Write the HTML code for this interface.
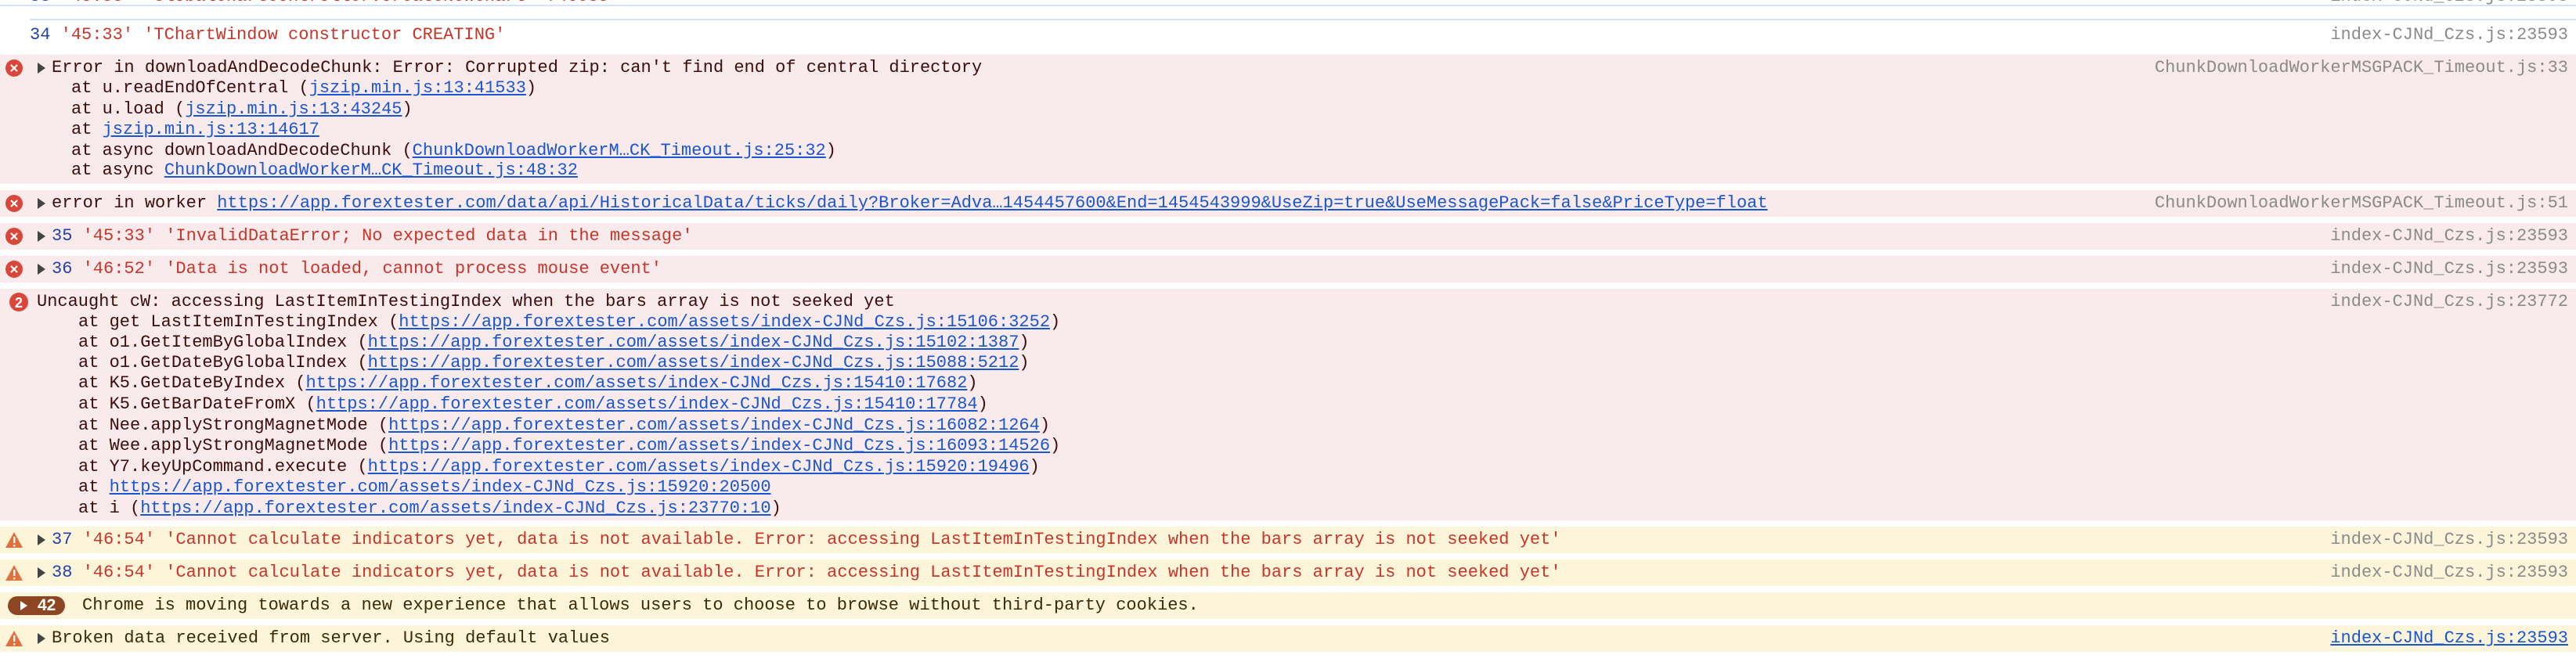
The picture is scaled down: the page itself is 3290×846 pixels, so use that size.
<!DOCTYPE html>
<html><head><meta charset="utf-8"><style>
*{margin:0;padding:0;box-sizing:border-box}
body{width:3290px;height:846px;background:#fff;position:relative;overflow:hidden;font-family:"Liberation Mono","DejaVu Sans Mono",monospace;font-size:22px;color:#3c0c0c}
.bg{position:absolute;left:0;width:3290px}
.e{background:#f9ebeb}.w{background:#fdf5da}
.l{position:absolute;height:26px;line-height:26px;white-space:pre}
.r{position:absolute;right:10px;height:26px;line-height:26px;color:#8a8a8a;white-space:pre}
.s{color:#c8352a}.n{color:#2242a8}
a{color:#1a56d0;text-decoration:underline}
.wt{color:#3b2a06}
.tri{position:absolute;width:0;height:0;border-top:7px solid transparent;border-bottom:7px solid transparent;border-left:10px solid #444}
svg{position:absolute}
</style></head><body>
<div class="l" style="top:-17px;left:38px"><span class="n">33</span> <span class="s">'45:33' 'GlobalChartController.createNewChart' 746035</span></div>
<div class="r" style="top:-17px">index-CJNd_Czs.js:23593</div>
<div class="bg" style="top:6px;height:2px;background:#d3e3fd"></div>
<div style="position:absolute;top:24px;left:38px;right:0;height:2px;background:#d3e3fd"></div>
<div class="l" style="top:32px;left:38px"><span class="n">34</span> <span class="s">'45:33' 'TChartWindow constructor CREATING'</span></div>
<div class="r" style="top:32px">index-CJNd_Czs.js:23593</div>

<div class="bg e" style="top:70px;height:165px"></div>
<svg style="left:7px;top:76px" width="22" height="22"><circle cx="11" cy="11" r="11" fill="#d9473a"/><path d="M7 7L15 15M15 7L7 15" stroke="#fff" stroke-width="2.2"/></svg>
<div class="tri" style="left:48px;top:80px"></div>
<div class="l" style="top:74px;left:66px">Error in downloadAndDecodeChunk: Error: Corrupted zip: can't find end of central directory</div>
<div class="l" style="top:100px;left:91px">at u.readEndOfCentral (<a>jszip.min.js:13:41533</a>)</div>
<div class="l" style="top:127px;left:91px">at u.load (<a>jszip.min.js:13:43245</a>)</div>
<div class="l" style="top:153px;left:91px">at <a>jszip.min.js:13:14617</a></div>
<div class="l" style="top:180px;left:91px">at async downloadAndDecodeChunk (<a>ChunkDownloadWorkerM…CK_Timeout.js:25:32</a>)</div>
<div class="l" style="top:205px;left:91px">at async <a>ChunkDownloadWorkerM…CK_Timeout.js:48:32</a></div>
<div class="r" style="top:74px">ChunkDownloadWorkerMSGPACK_Timeout.js:33</div>

<div class="bg e" style="top:243px;height:34px"></div>
<svg style="left:7px;top:249px" width="22" height="22"><circle cx="11" cy="11" r="11" fill="#d9473a"/><path d="M7 7L15 15M15 7L7 15" stroke="#fff" stroke-width="2.2"/></svg>
<div class="tri" style="left:48px;top:253px"></div>
<div class="l" style="top:247px;left:66px">error in worker <a>https://app.forextester.com/data/api/HistoricalData/ticks/daily?Broker=Adva…1454457600&amp;End=1454543999&amp;UseZip=true&amp;UseMessagePack=false&amp;PriceType=float</a></div>
<div class="r" style="top:247px">ChunkDownloadWorkerMSGPACK_Timeout.js:51</div>

<div class="bg e" style="top:285px;height:34px"></div>
<svg style="left:7px;top:291px" width="22" height="22"><circle cx="11" cy="11" r="11" fill="#d9473a"/><path d="M7 7L15 15M15 7L7 15" stroke="#fff" stroke-width="2.2"/></svg>
<div class="tri" style="left:48px;top:295px"></div>
<div class="l" style="top:289px;left:66px"><span class="n">35</span> <span class="s">'45:33' 'InvalidDataError; No expected data in the message'</span></div>
<div class="r" style="top:289px">index-CJNd_Czs.js:23593</div>

<div class="bg e" style="top:327px;height:34px"></div>
<svg style="left:7px;top:333px" width="22" height="22"><circle cx="11" cy="11" r="11" fill="#d9473a"/><path d="M7 7L15 15M15 7L7 15" stroke="#fff" stroke-width="2.2"/></svg>
<div class="tri" style="left:48px;top:337px"></div>
<div class="l" style="top:331px;left:66px"><span class="n">36</span> <span class="s">'46:52' 'Data is not loaded, cannot process mouse event'</span></div>
<div class="r" style="top:331px">index-CJNd_Czs.js:23593</div>

<div class="bg e" style="top:369px;height:296px"></div>
<svg style="left:12px;top:374px" width="24" height="24"><circle cx="12" cy="12" r="12" fill="#d9473a"/><text x="12" y="19" text-anchor="middle" fill="#fff" font-family="Liberation Sans,sans-serif" font-weight="bold" font-size="18">2</text></svg>
<div class="l" style="top:373px;left:47px">Uncaught cW: accessing LastItemInTestingIndex when the bars array is not seeked yet</div>
<div class="l" style="top:399px;left:100px">at get LastItemInTestingIndex (<a>https://app.forextester.com/assets/index-CJNd_Czs.js:15106:3252</a>)</div>
<div class="l" style="top:425px;left:100px">at o1.GetItemByGlobalIndex (<a>https://app.forextester.com/assets/index-CJNd_Czs.js:15102:1387</a>)</div>
<div class="l" style="top:451px;left:100px">at o1.GetDateByGlobalIndex (<a>https://app.forextester.com/assets/index-CJNd_Czs.js:15088:5212</a>)</div>
<div class="l" style="top:477px;left:100px">at K5.GetDateByIndex (<a>https://app.forextester.com/assets/index-CJNd_Czs.js:15410:17682</a>)</div>
<div class="l" style="top:504px;left:100px">at K5.GetBarDateFromX (<a>https://app.forextester.com/assets/index-CJNd_Czs.js:15410:17784</a>)</div>
<div class="l" style="top:531px;left:100px">at Nee.applyStrongMagnetMode (<a>https://app.forextester.com/assets/index-CJNd_Czs.js:16082:1264</a>)</div>
<div class="l" style="top:557px;left:100px">at Wee.applyStrongMagnetMode (<a>https://app.forextester.com/assets/index-CJNd_Czs.js:16093:14526</a>)</div>
<div class="l" style="top:584px;left:100px">at Y7.keyUpCommand.execute (<a>https://app.forextester.com/assets/index-CJNd_Czs.js:15920:19496</a>)</div>
<div class="l" style="top:610px;left:100px">at <a>https://app.forextester.com/assets/index-CJNd_Czs.js:15920:20500</a></div>
<div class="l" style="top:637px;left:100px">at i (<a>https://app.forextester.com/assets/index-CJNd_Czs.js:23770:10</a>)</div>
<div class="r" style="top:373px">index-CJNd_Czs.js:23772</div>

<div class="bg w" style="top:673px;height:34px"></div>
<svg style="left:6px;top:679px" width="24" height="22"><path d="M12 1L23 21H1Z" fill="#e07040"/><rect x="11" y="7" width="2.4" height="8" fill="#fff"/><rect x="11" y="17" width="2.4" height="2.4" fill="#fff"/></svg>
<div class="tri" style="left:48px;top:683px"></div>
<div class="l" style="top:677px;left:66px"><span class="n">37</span> <span class="s">'46:54' 'Cannot calculate indicators yet, data is not available. Error: accessing LastItemInTestingIndex when the bars array is not seeked yet'</span></div>
<div class="r" style="top:677px">index-CJNd_Czs.js:23593</div>

<div class="bg w" style="top:715px;height:34px"></div>
<svg style="left:6px;top:721px" width="24" height="22"><path d="M12 1L23 21H1Z" fill="#e07040"/><rect x="11" y="7" width="2.4" height="8" fill="#fff"/><rect x="11" y="17" width="2.4" height="2.4" fill="#fff"/></svg>
<div class="tri" style="left:48px;top:725px"></div>
<div class="l" style="top:719px;left:66px"><span class="n">38</span> <span class="s">'46:54' 'Cannot calculate indicators yet, data is not available. Error: accessing LastItemInTestingIndex when the bars array is not seeked yet'</span></div>
<div class="r" style="top:719px">index-CJNd_Czs.js:23593</div>

<div class="bg w" style="top:757px;height:34px"></div>
<div style="position:absolute;left:10px;top:762px;width:73px;height:24px;border-radius:12px;background:#8e4521"></div>
<div style="position:absolute;left:26px;top:768px;width:0;height:0;border-top:6px solid transparent;border-bottom:6px solid transparent;border-left:9px solid #fff"></div>
<div style="position:absolute;left:48px;top:761px;line-height:26px;color:#fff;font-family:'Liberation Sans',sans-serif;font-weight:bold;font-size:21px">42</div>
<div class="l wt" style="top:761px;left:105px">Chrome is moving towards a new experience that allows users to choose to browse without third-party cookies.</div>

<div class="bg w" style="top:799px;height:34px"></div>
<svg style="left:6px;top:805px" width="24" height="22"><path d="M12 1L23 21H1Z" fill="#e07040"/><rect x="11" y="7" width="2.4" height="8" fill="#fff"/><rect x="11" y="17" width="2.4" height="2.4" fill="#fff"/></svg>
<div class="tri" style="left:48px;top:809px"></div>
<div class="l wt" style="top:803px;left:66px">Broken data received from server. Using default values</div>
<div class="r" style="top:803px"><a>index-CJNd_Czs.js:23593</a></div>
</body></html>
